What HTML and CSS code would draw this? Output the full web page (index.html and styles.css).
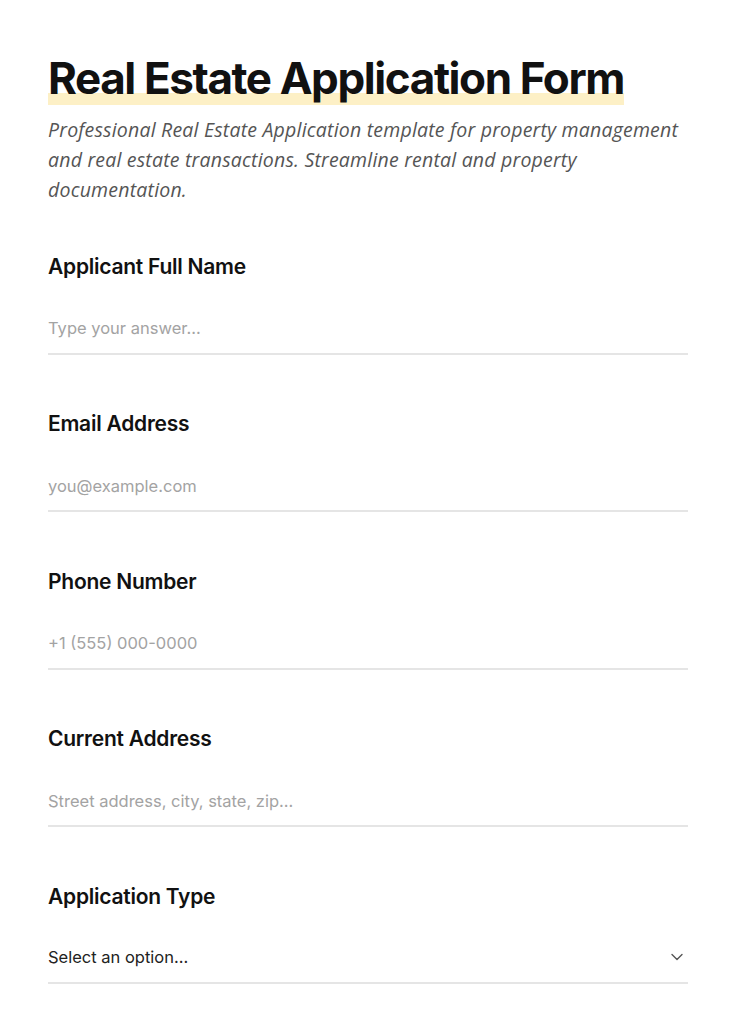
FILE: index.html
```html
<!DOCTYPE html>
<html lang="en">
<head>
<meta charset="utf-8">
<title>Real Estate Application Form</title>
<link rel="stylesheet" href="styles.css">
</head>
<body>
<main class="form">
  <header class="form-header">
    <h1 class="title"><span class="title-mark">Real Estate Application Form</span></h1>
    <p class="desc">Professional Real Estate Application template for property management and real estate transactions. Streamline rental and property documentation.</p>
  </header>

  <div class="field">
    <label class="label">Applicant Full Name</label>
    <div class="input"><span class="placeholder">Type your answer...</span></div>
  </div>

  <div class="field">
    <label class="label">Email Address</label>
    <div class="input"><span class="placeholder">you@example.com</span></div>
  </div>

  <div class="field">
    <label class="label">Phone Number</label>
    <div class="input"><span class="placeholder">+1 (555) 000-0000</span></div>
  </div>

  <div class="field">
    <label class="label">Current Address</label>
    <div class="input"><span class="placeholder">Street address, city, state, zip...</span></div>
  </div>

  <div class="field field-select">
    <label class="label">Application Type</label>
    <div class="input select">
      <span class="value">Select an option...</span>
      <svg class="chevron" width="14" height="14" viewBox="0 0 14 14" aria-hidden="true"><path d="M2 4.5 L7 9.5 L12 4.5" fill="none" stroke="#555" stroke-width="1.4" stroke-linecap="round" stroke-linejoin="round"/></svg>
    </div>
  </div>
</main>
</body>
</html>
```

FILE: styles.css
```css
html, body {
  margin: 0;
  padding: 0;
  background: #ffffff;
}
body {
  font-family: "Inter", "Liberation Sans", sans-serif;
  color: #111111;
}
.form {
  width: 640px;
  padding: 51px 48px 40px;
  display: flex;
  flex-direction: column;
  gap: 55.5px;
}
.form-header {
  display: flex;
  flex-direction: column;
  gap: 10px;
  align-items: flex-start;
  margin-bottom: -8px;
}
.title {
  margin: 0;
  font-size: 44px;
  font-weight: 700;
  letter-spacing: -1.4px;
  line-height: 54px;
}
.title-mark {
  display: inline-block;
  background: linear-gradient(to bottom, transparent 0, transparent 42px, #fdf0c6 42px, #fdf0c6 54px);
}
.desc {
  margin: 0;
  width: 640px;
  font-family: "Open Sans", "Lato", sans-serif;
  font-style: italic;
  font-size: 19.5px;
  line-height: 30px;
  letter-spacing: 0.2px;
  color: #555555;
}
.field {
  display: flex;
  flex-direction: column;
  gap: 23px;
}
.field-select {
  gap: 21px;
}
.label {
  font-size: 21px;
  font-weight: 600;
  line-height: 28px;
  letter-spacing: -0.25px;
  color: #111111;
}
.input {
  height: 49px;
  border-bottom: 2px solid #e5e5e5;
  display: flex;
  align-items: center;
  font-size: 16.5px;
}
.placeholder {
  color: #a3a3a3;
}
.select {
  justify-content: space-between;
  height: 50px;
}
.value {
  color: #222222;
}
.chevron {
  margin-right: 4px;
}
```
